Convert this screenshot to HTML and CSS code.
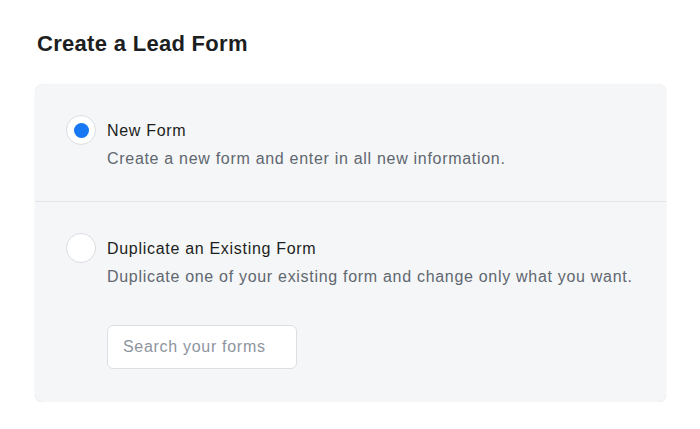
FILE: index.html
```html
<!DOCTYPE html>
<html>
<head>
<meta charset="utf-8">
<link rel="stylesheet" href="styles.css">
</head>
<body>
<div class="page">
  <h1 class="title">Create a Lead Form</h1>
  <div class="card">
    <div class="option">
      <span class="radio checked"><span class="dot"></span></span>
      <div class="text">
        <div class="label">New Form</div>
        <div class="desc">Create a new form and enter in all new information.</div>
      </div>
    </div>
    <div class="option second">
      <span class="radio"></span>
      <div class="text">
        <div class="label">Duplicate an Existing Form</div>
        <div class="desc">Duplicate one of your existing form and change only what you want.</div>
        <div class="search">Search your forms</div>
      </div>
    </div>
  </div>
</div>
</body>
</html>
```
FILE: styles.css
```css
html, body {
  margin: 0;
  padding: 0;
  background: #ffffff;
}
.page {
  font-family: "Liberation Sans", Arial, sans-serif;
  padding: 30px 34px 0 35px;
}
.title {
  margin: 0 0 0 2px;
  font-size: 22px;
  letter-spacing: 0.3px;
  font-weight: 700;
  color: #1c1e21;
  line-height: 28px;
}
.card {
  margin-top: 26px;
  background: #f5f6f7;
  border-radius: 8px;
  box-shadow: 0 0 1px rgba(0,0,0,0.12), 0 1px 2px rgba(0,0,0,0.06);
  height: 318px;
  box-sizing: border-box;
}
.option {
  display: flex;
  align-items: flex-start;
  gap: 11px;
  padding: 31px 0 0 31px;
  height: 118px;
  box-sizing: border-box;
  border-bottom: 1px solid #e2e5ea;
}
.option.second {
  border-bottom: none;
  height: auto;
}
.radio {
  flex: none;
  width: 28px;
  height: 28px;
  border-radius: 50%;
  background: #ffffff;
  border: 1px solid #dadde1;
  display: flex;
  align-items: center;
  justify-content: center;
}
.dot {
  width: 15px;
  height: 15px;
  border-radius: 50%;
  background: #1877f2;
}
.text {
  padding-top: 6px;
  letter-spacing: 0.7px;
}
.label {
  font-size: 16px;
  line-height: 20px;
  color: #1c1e21;
}
.desc {
  margin-top: 8px;
  font-size: 16px;
  line-height: 20px;
  color: #606770;
}
.search {
  margin-top: 38px;
  width: 190px;
  height: 44px;
  box-sizing: border-box;
  border: 1px solid #dddfe2;
  border-radius: 6px;
  background: #ffffff;
  padding: 0 15px;
  display: flex;
  align-items: center;
  font-size: 16px;
  color: #8d949e;
}
```
